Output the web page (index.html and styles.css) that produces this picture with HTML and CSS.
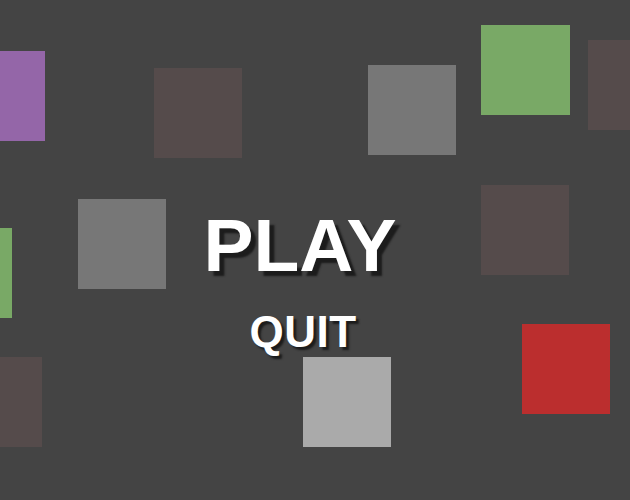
FILE: index.html
```html
<!DOCTYPE html>
<html>
<head>
<meta charset="utf-8">
<link rel="stylesheet" href="styles.css">
</head>
<body>
<div class="stage">
  <div class="sq purple" style="left:-43px;top:51px"></div>
  <div class="sq brown" style="left:154px;top:68px"></div>
  <div class="sq gray" style="left:368px;top:65px"></div>
  <div class="sq green" style="left:481px;top:25px"></div>
  <div class="sq brown" style="left:588px;top:40px"></div>
  <div class="sq gray" style="left:78px;top:199px"></div>
  <div class="sq green" style="left:-77px;top:228px"></div>
  <div class="sq brown" style="left:481px;top:185px"></div>
  <div class="sq brown" style="left:-46px;top:357px"></div>
  <div class="sq light" style="left:303px;top:357px"></div>
  <div class="sq red" style="left:522px;top:324px"></div>
  <div class="menu">
    <div class="play">PLAY</div>
    <div class="quit">QUIT</div>
  </div>
</div>
</body>
</html>
```
FILE: styles.css
```css
html, body {
  margin: 0;
  padding: 0;
  background: #444444;
}
.stage {
  position: relative;
  width: 630px;
  height: 500px;
  overflow: hidden;
  background: #444444;
  font-family: "Liberation Sans", Arial, sans-serif;
}
.sq {
  position: absolute;
  width: 88px;
  height: 90px;
}
.purple { background: #9466a8; }
.brown { background: #554b4b; }
.gray { background: #777777; }
.green { background: #79a966; width: 89px; }
.light { background: #aaaaaa; }
.red { background: #bb2e2e; }
.menu {
  position: relative;
  width: 600px;
  padding-top: 200px;
  display: flex;
  flex-direction: column;
  align-items: center;
  color: #ffffff;
  font-weight: bold;
}
.play {
  font-size: 75px;
  line-height: 90px;
  letter-spacing: 0;
  text-shadow: 5px 5px 2px #1c1c1c;
}
.quit {
  margin-top: 17px;
  margin-left: 6px;
  font-size: 44px;
  line-height: 50px;
  letter-spacing: 0.5px;
  text-shadow: 3px 3px 2px #1c1c1c;
}
```
